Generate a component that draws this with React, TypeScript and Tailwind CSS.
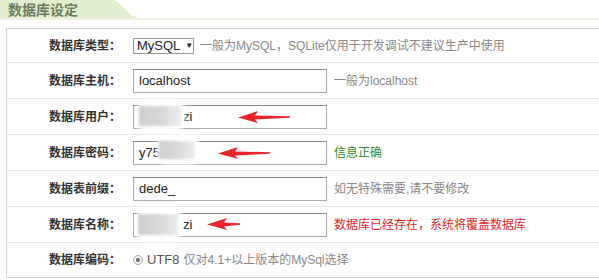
import React from "react";

const FONT = { fontFamily: '"Liberation Sans", "Noto Sans CJK SC", sans-serif' };

function Arrow({ x, y, w }: { x: number; y: number; w: number }) {
  // red hand-drawn arrow pointing left, overlaid on the row
  return (
    <svg
      className="absolute"
      style={{ left: x, top: y }}
      width={w}
      height={12}
      viewBox={`0 0 ${w} 12`}
    >
      <path
        d={`M0 6.5 L20 0 L17 4.4 L${w} 5.2 L${w} 6.8 L17 8.6 L20 12 Z`}
        fill="#e8262a"
      />
    </svg>
  );
}

function Blur({ x, y, w, h }: { x: number; y: number; w: number; h: number }) {
  return (
    <div className="absolute" style={{ left: x, top: y, width: w, height: h }}>
      <div className="absolute inset-0 rounded-[10px] bg-white blur-[2px]" />
      <div className="absolute left-[2px] right-[4px] top-[6px] bottom-[6px] bg-gradient-to-r from-[#cfcfcf] via-[#d8d8d8] to-[#ececec] blur-[1px]" />
    </div>
  );
}

function Row({
  label,
  children,
  last,
}: {
  label: string;
  children: React.ReactNode;
  last?: boolean;
}) {
  return (
    <div
      className={
        "relative flex items-center " +
        (last ? "h-[34px]" : "h-[36px] border-b border-[#e6e6e6]")
      }
    >
      <div className="w-[114px] text-right text-[12px] text-[#333] font-bold leading-none">
        {label}
      </div>
      <div className="ml-[12px] flex items-center">{children}</div>
    </div>
  );
}

function Input({ value }: { value: string }) {
  return (
    <div className="w-[194px] h-[24px] border border-[#aaa] border-t-[#888] bg-white px-[5px] flex items-center text-[13px] text-[#222]">
      {value}
    </div>
  );
}

export default function App() {
  return (
    <div className="w-[599px] h-[280px] overflow-hidden bg-white relative" style={FONT}>
      {/* title bar */}
      <div className="h-[28px]">
        <div className="flex h-[18px]">
          <div className="w-[112px] bg-[#e0eecf] pl-[8px] flex items-center text-[14px] font-bold text-[#6b7c5e] leading-none pt-[2px]">
            数据库设定
          </div>
          <svg width="30" height="18" viewBox="0 0 30 18">
            <path d="M0 0 C10 0 14 18 30 18 L0 18 Z" fill="#e0eecf" />
          </svg>
        </div>
        <div className="h-[2px] bg-[#eef1e3]" />
      </div>

      {/* form box */}
      <div className="ml-[6px] w-[620px] border-l border-t border-b border-[#d4d4d4]">
        <div className="relative flex items-center h-[34px] border-b border-[#e6e6e6]">
          <div className="w-[114px] text-right text-[12px] text-[#333] font-bold leading-none">
            数据库类型：
          </div>
          <div className="ml-[12px] flex items-center">
            <div className="w-[61px] h-[16px] border border-[#999] flex items-center pl-[3px] text-[13px] text-[#222] leading-none">
              MySQL
              <span className="ml-[5px] text-[8px]">▼</span>
            </div>
            <span className="ml-[6px] text-[12px] text-[#888]">
              一般为MySQL，SQLite仅用于开发调试不建议生产中使用
            </span>
          </div>
        </div>

        <Row label="数据库主机：">
          <Input value="localhost" />
          <span className="ml-[7px] text-[12px] text-[#888]">一般为localhost</span>
        </Row>

        <Row label="数据库用户：">
          <div className="w-[194px] h-[24px] border border-[#aaa] border-t-[#888] bg-white flex items-center text-[13px] text-[#222]">
            <span className="ml-[49px]">zi</span>
          </div>
          <Blur x={130} y={1} w={48} h={32} />
          <Arrow x={231} y={12} w={52} />
        </Row>

        <Row label="数据库密码：">
          <Input value="y75" />
          <span className="ml-[7px] text-[12px] text-[#2f8a22]">信息正确</span>
          <Blur x={150} y={0} w={42} h={30} />
          <Arrow x={211} y={12} w={52} />
        </Row>

        <Row label="数据表前缀：">
          <Input value="dede_" />
          <span className="ml-[7px] text-[12px] text-[#888]">如无特殊需要,请不要修改</span>
        </Row>

        <Row label="数据库名称：">
          <div className="w-[194px] h-[24px] border border-[#aaa] border-t-[#888] bg-white flex items-center text-[13px] text-[#222]">
            <span className="ml-[49px]">zi</span>
          </div>
          <span className="ml-[7px] text-[12px] text-[#e21f1f]">
            数据库已经存在，系统将覆盖数据库
          </span>
          <Blur x={129} y={1} w={46} h={33} />
          <Arrow x={200} y={11} w={33} />
        </Row>

        <Row label="数据库编码：" last>
          <span className="w-[10px] h-[10px] rounded-full border border-[#aaa] bg-[#f4f4f4] flex items-center justify-center">
            <span className="w-[4px] h-[4px] rounded-full bg-[#666]" />
          </span>
          <span className="ml-[4px] text-[13px] text-[#555]">UTF8</span>
          <span className="ml-[4px] text-[12px] text-[#888]">仅对4.1+以上版本的MySql选择</span>
        </Row>
      </div>
    </div>
  );
}
